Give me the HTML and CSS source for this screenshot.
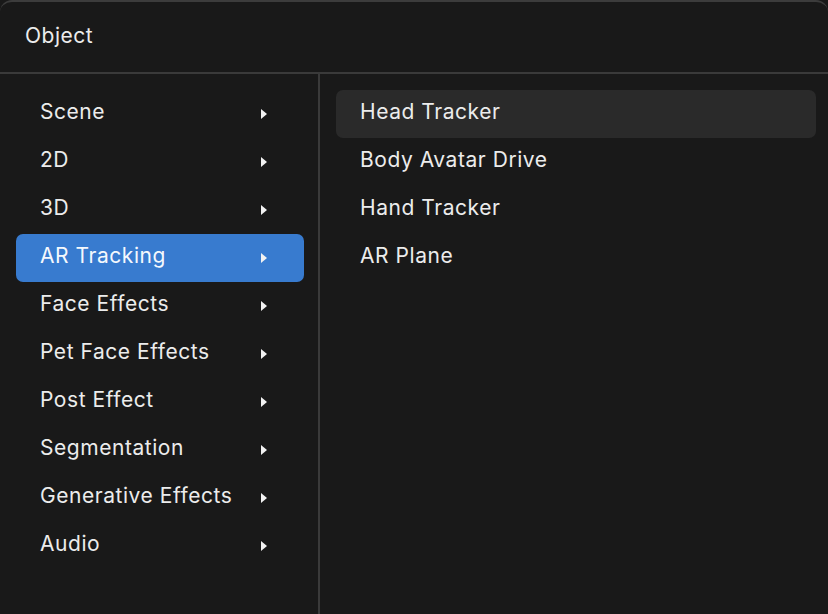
FILE: index.html
```html
<!DOCTYPE html>
<html>
<head>
<meta charset="utf-8">
<link rel="stylesheet" href="styles.css">
</head>
<body>
<div class="window">
  <div class="header">Object</div>
  <div class="body">
    <ul class="menu left">
      <li class="item">Scene<span class="arrow"></span></li>
      <li class="item">2D<span class="arrow"></span></li>
      <li class="item">3D<span class="arrow"></span></li>
      <li class="item active">AR Tracking<span class="arrow"></span></li>
      <li class="item">Face Effects<span class="arrow"></span></li>
      <li class="item">Pet Face Effects<span class="arrow"></span></li>
      <li class="item">Post Effect<span class="arrow"></span></li>
      <li class="item">Segmentation<span class="arrow"></span></li>
      <li class="item">Generative Effects<span class="arrow"></span></li>
      <li class="item">Audio<span class="arrow"></span></li>
    </ul>
    <ul class="menu right">
      <li class="item hover">Head Tracker</li>
      <li class="item">Body Avatar Drive</li>
      <li class="item">Hand Tracker</li>
      <li class="item">AR Plane</li>
    </ul>
  </div>
</div>
</body>
</html>
```
FILE: styles.css
```css
html, body {
  margin: 0;
  padding: 0;
  background: #191919;
}
body {
  width: 828px;
  height: 614px;
  overflow: hidden;
  font-family: Inter, "Noto Sans", sans-serif;
  color: #ececec;
}
.window {
  width: 828px;
  height: 614px;
  display: flex;
  flex-direction: column;
  background: #191919;
  border-top: 2px solid #3c3c3c;
  border-radius: 12px 12px 0 0;
  box-sizing: border-box;
}
.header {
  height: 72px;
  display: flex;
  align-items: center;
  padding-left: 25px;
  padding-bottom: 4px;
  font-size: 21px;
  letter-spacing: 0.5px;
  border-bottom: 2px solid #3a3a3a;
  box-sizing: border-box;
  flex: none;
}
.body {
  flex: 1;
  display: flex;
}
.menu {
  list-style: none;
  margin: 0;
  padding: 16px 0 0 0;
}
.left {
  width: 320px;
  border-right: 2px solid #3a3a3a;
  padding-left: 16px;
  padding-right: 14px;
  box-sizing: border-box;
  flex: none;
}
.right {
  flex: 1;
  padding-left: 16px;
  padding-right: 12px;
}
.item {
  height: 48px;
  display: flex;
  align-items: center;
  padding-left: 24px;
  padding-bottom: 5px;
  box-sizing: border-box;
  font-size: 21px;
  letter-spacing: 0.55px;
  border-radius: 7px;
}
.left .item {
  justify-content: space-between;
  padding-right: 37px;
}
.active {
  background: #387bcf;
  color: #f4f8fd;
}
.hover {
  background: #2a2a2a;
}
.arrow {
  width: 0;
  height: 0;
  border-top: 5px solid transparent;
  border-bottom: 5px solid transparent;
  border-left: 6px solid #f2f2f2;
  margin-top: 5px;
}
```
